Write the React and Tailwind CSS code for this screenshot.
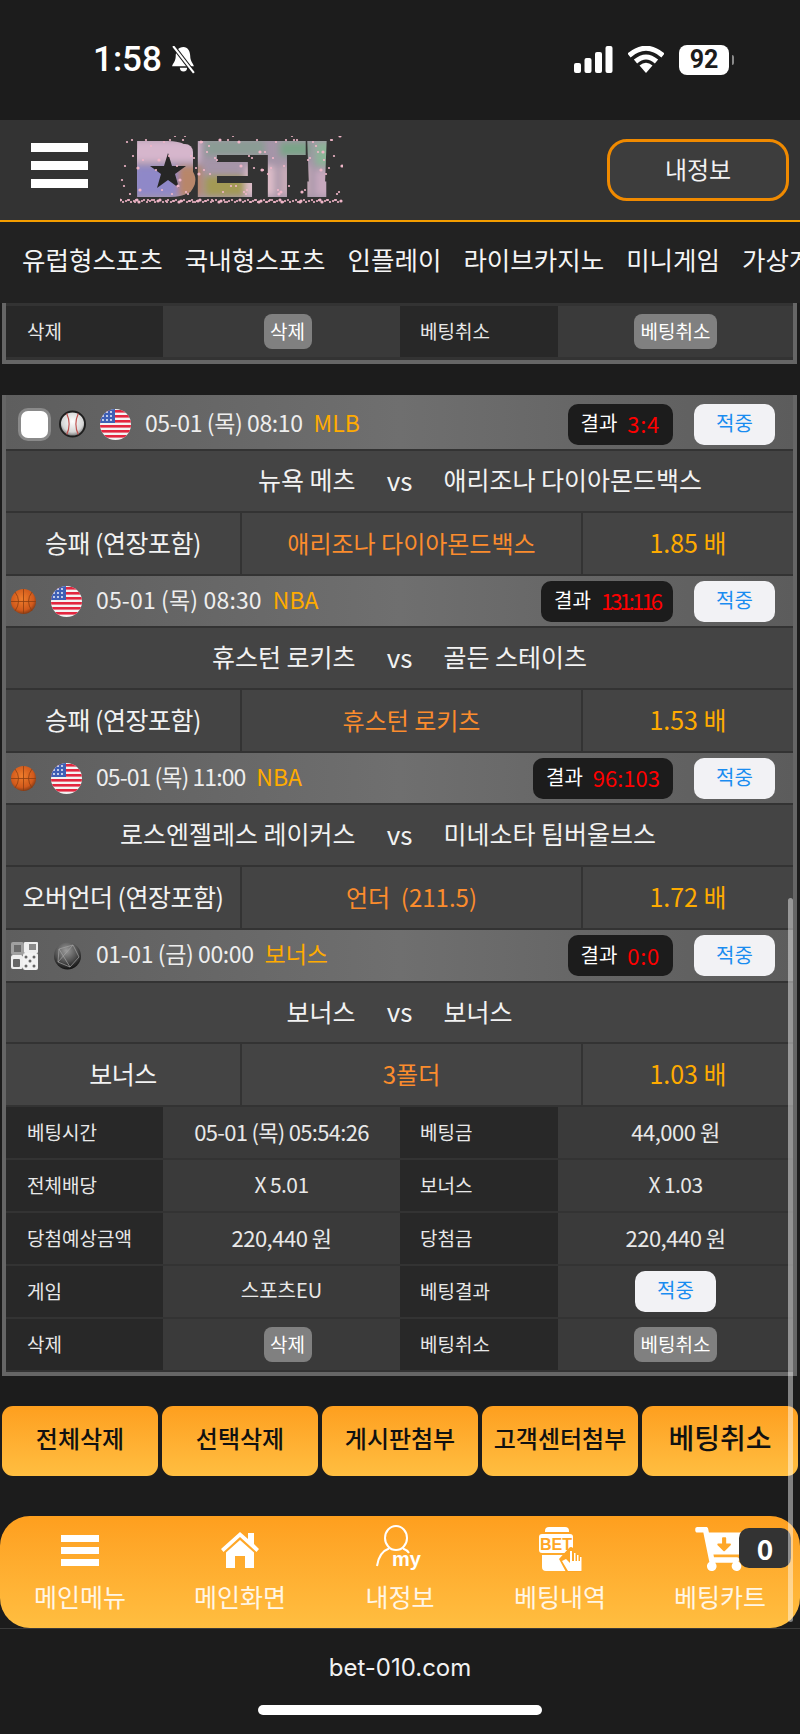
import { FaCartArrowDown } from 'react-icons/fa'

const matches = [
  { first: true, kind: 'baseball', date: '05-01 (목) 08:10', dateFit: 'tracking-[-0.4px]', league: 'MLB', score: '3:4', scoreFit: 'tracking-[0.7px]', home: '뉴욕 메츠', away: '애리조나 다이아몬드백스', market: '승패 (연장포함)', pick: '애리조나 다이아몬드백스', odds: '1.85 배', heads: 'h-[54px]', team: 'h-[60px]', bet: 'h-[61px]' },
  { kind: 'basketball', date: '05-01 (목) 08:30', dateFit: 'tracking-[0.15px]', league: 'NBA', score: '131:116', scoreFit: 'tracking-[-2.9px]', home: '휴스턴 로키츠', away: '골든 스테이츠', market: '승패 (연장포함)', pick: '휴스턴 로키츠', odds: '1.53 배', heads: 'h-[50px]', team: 'h-[60px]', bet: 'h-[61px]' },
  { kind: 'basketball', date: '05-01 (목) 11:00', dateFit: 'tracking-[-0.95px]', league: 'NBA', score: '96:103', scoreFit: 'tracking-[0px]', home: '로스엔젤레스 레이커스', away: '미네소타 팀버울브스', market: '오버언더 (연장포함)', pick: '언더  (211.5)', odds: '1.72 배', heads: 'h-[50px]', team: 'h-[60px]', bet: 'h-[61px]' },
  { kind: 'bonus', date: '01-01 (금) 00:00', dateFit: 'tracking-[-0.4px]', league: '보너스', score: '0:0', scoreFit: 'tracking-[0.7px]', home: '보너스', away: '보너스', market: '보너스', pick: '3폴더', odds: '1.03 배', heads: 'h-[51px]', team: 'h-[59px]', bet: 'h-[61px]' },
]

const navItems = ['유럽형스포츠', '국내형스포츠', '인플레이', '라이브카지노', '미니게임', '가상게임']
const actions = ['전체삭제', '선택삭제', '게시판첨부', '고객센터첨부']

// fixed pseudo random speckles for the logo
const speckles = Array.from({ length: 200 }, (_, i) => {
  const a = (i * 73 + 17) % 223
  const b = (i * i * 7 + i * 31) % 68
  const band = i % 2 === 0 ? 64 + (i % 3) : i % 7 === 0 ? 3 + (i % 4) : b
  return { x: a, y: band, r: i % 5 === 0 ? 1.6 : 1.1 }
})

function Flag() {
  return (
    <svg width="31" height="31" viewBox="0 0 31 31" className="shrink-0">
      <defs>
        <clipPath id="flagclip">
          <circle cx="15.5" cy="15.5" r="15.5" />
        </clipPath>
      </defs>
      <g clipPath="url(#flagclip)">
        <rect width="31" height="31" fill="#f3f3f3" />
        {[0, 5, 10, 15, 20, 25].map((y) => (
          <rect key={y} y={y + 1} width="31" height="2.6" fill="#e3263f" />
        ))}
        <rect width="15" height="14" fill="#3f5fb5" />
        {[3, 7, 11].map((x) =>
          [3, 7, 11].map((y) => <circle key={`${x}-${y}`} cx={x} cy={y} r="0.9" fill="#fff" />)
        )}
      </g>
    </svg>
  )
}

function Baseball() {
  return (
    <svg width="27" height="28" viewBox="0 0 28 28" className="shrink-0">
      <defs>
        <radialGradient id="bb" cx="50%" cy="40%" r="60%">
          <stop offset="0%" stopColor="#ffffff" />
          <stop offset="70%" stopColor="#d5d5d5" />
          <stop offset="100%" stopColor="#666666" />
        </radialGradient>
      </defs>
      <circle cx="14" cy="14" r="13" fill="url(#bb)" stroke="#1e1e1e" strokeWidth="2" />
      <path d="M8 3 Q13 14 8 25" fill="none" stroke="#c0504d" strokeWidth="1.2" />
      <path d="M20 3 Q15 14 20 25" fill="none" stroke="#c0504d" strokeWidth="1.2" />
    </svg>
  )
}

function Basketball() {
  return (
    <svg width="25" height="25" viewBox="0 0 25 25" className="shrink-0 mr-[1px]">
      <defs>
        <radialGradient id="bk" cx="45%" cy="40%" r="65%">
          <stop offset="0%" stopColor="#ef7d2c" />
          <stop offset="70%" stopColor="#d1591b" />
          <stop offset="100%" stopColor="#6e3214" />
        </radialGradient>
      </defs>
      <circle cx="12.5" cy="12.5" r="12.5" fill="url(#bk)" />
      <path d="M12.5 0V25M0 12.5H25M4 3Q11 12 4 22M21 3Q14 12 21 22" fill="none" stroke="#8a3d12" strokeWidth="0.8" />
    </svg>
  )
}

function BonusDice() {
  return (
    <svg width="28" height="28" viewBox="0 0 28 28" className="shrink-0">
      <rect x="0" y="0" width="13" height="13" rx="2" fill="#a0a0a0" />
      <rect x="3" y="3" width="7" height="7" fill="#6a6a6a" />
      <rect x="13" y="0" width="14" height="11" rx="1" fill="#eeeeee" />
      <rect x="18" y="2" width="7" height="6" fill="#8a8a8a" />
      <rect x="0" y="13" width="12" height="14" rx="2" fill="#eeeeee" />
      <rect x="2" y="17" width="7" height="8" rx="1" fill="#666666" />
      <rect x="12" y="11" width="15" height="17" rx="2" fill="#f2f2f2" />
      {[[15, 15], [23, 15], [19, 19], [15, 24], [23, 24]].map(([x, y]) => (
        <circle key={`${x}${y}`} cx={x} cy={y} r="1.5" fill="#666" />
      ))}
    </svg>
  )
}

function BonusBall() {
  return (
    <svg width="29" height="28" viewBox="0 0 29 28" className="shrink-0">
      <defs>
        <radialGradient id="bs" cx="45%" cy="30%" r="70%">
          <stop offset="0%" stopColor="#9a9a9a" />
          <stop offset="60%" stopColor="#4f4f4f" />
          <stop offset="100%" stopColor="#111111" />
        </radialGradient>
      </defs>
      <circle cx="14.5" cy="14" r="13.5" fill="url(#bs)" />
      <path d="M6 7L20 3L26 15L17 25L5 20ZM6 7L17 25M20 3L5 20" fill="none" stroke="#a5a5a5" strokeWidth="0.7" />
    </svg>
  )
}

function MatchHead({ m }) {
  return (
    <div className={`${m.heads} shrink-0 flex items-center justify-between bg-gradient-to-r from-[#5e5e5e] via-[#6f6f6f] to-[#5c5c5c] pr-[18px] ${m.first ? 'pl-[15px] pt-[4px]' : 'pl-[5px]'}`}>
      <div className="flex items-center gap-[14px]">
        {m.first && <div className="w-[27px] h-[27px] -mr-[3px] shrink-0 rounded-[7px] bg-white ring-[3px] ring-[#8a8a8a]" />}
        {m.kind === 'baseball' && <Baseball />}
        {m.kind === 'basketball' && <Basketball />}
        {m.kind === 'bonus' && <BonusDice />}
        {m.kind === 'bonus' ? <BonusBall /> : <Flag />}
        <div className="flex items-center gap-[11px] text-[23px] leading-none text-[#eeeeee] pb-[4px]">
          <span className={m.dateFit}>{m.date}</span>
          <span className="text-[#ffab00]">{m.league}</span>
        </div>
      </div>
      <div className="flex items-center gap-[21px]">
        <div className="h-[41px] px-[13px] pb-[2px] flex items-center gap-[10px] rounded-[10px] bg-[#1c1c1c] text-[20px] leading-none">
          <span className="text-white">결과</span>
          <span className={`text-[22px] text-[#ff0000] ${m.scoreFit}`}>{m.score}</span>
        </div>
        <div className="w-[81px] h-[41px] pb-[2px] flex items-center justify-center rounded-[10px] bg-[#f2f2f5] text-[20px] leading-none text-[#1a8cf0]">적중</div>
      </div>
    </div>
  )
}

function Match({ m }) {
  return (
    <>
      <MatchHead m={m} />
      <div className={`${m.team} shrink-0 flex items-center pb-[3px] bg-[#444444] text-[25px] leading-none text-[#f2f2f2]`}>
        <div className="flex-1 text-right">{m.home}</div>
        <div className="w-[88px] text-center text-[26px]">vs</div>
        <div className="flex-1 text-left">{m.away}</div>
      </div>
      <div className={`${m.bet} shrink-0 grid grid-cols-[234px_339px_1fr] gap-x-[2px] bg-[#333333] text-[25px] leading-none`}>
        <div className="flex items-center justify-center pb-[2px] bg-[#444444] text-[#f2f2f2] tracking-[-0.5px] whitespace-nowrap">{m.market}</div>
        <div className="flex items-center justify-center pb-[2px] bg-[#444444] text-[24px] text-[#fb8c2d] whitespace-pre">{m.pick}</div>
        <div className="flex items-center justify-center pb-[2px] bg-[#444444] text-[#ffab00]">{m.odds}</div>
      </div>
    </>
  )
}

function InfoRow({ a, b, c, d }) {
  return (
    <div className="h-[51px] shrink-0 grid grid-cols-[157px_237px_158px_1fr] text-[19px] leading-none text-[#e8e8e8]">
      <div className="flex items-center pl-[21px] pb-[3px] bg-[#282828]">{a}</div>
      <div className="flex items-center justify-center pb-[3px] bg-[#3a3a3a]">{b}</div>
      <div className="flex items-center pl-[20px] pb-[3px] bg-[#282828]">{c}</div>
      <div className="flex items-center justify-center pb-[3px] bg-[#3a3a3a]">{d}</div>
    </div>
  )
}

function DeleteRow() {
  return (
    <InfoRow
      a="삭제"
      b={<span className="h-[35px] w-[48px] ml-[12px] mt-[3px] pb-[3px] flex items-center justify-center rounded-[8px] bg-[#808080] text-white whitespace-nowrap">삭제</span>}
      c="베팅취소"
      d={<span className="h-[35px] w-[83px] mt-[3px] pb-[3px] flex items-center justify-center rounded-[8px] bg-[#808080] text-white whitespace-nowrap">베팅취소</span>}
    />
  )
}

function Logo() {
  return (
    <svg width="223" height="68" viewBox="0 0 223 68" className="shrink-0">
      <defs>
        <mask id="betmask" maskUnits="userSpaceOnUse" x="0" y="0" width="223" height="68">
          <text x="15" y="58" fontFamily="Liberation Sans" fontWeight="700" fontSize="72" textLength="196" lengthAdjust="spacingAndGlyphs" fill="#fff" stroke="#fff" strokeWidth="6">BET!</text>
          <rect x="17" y="8" width="56" height="50" rx="8" fill="#fff" />
        </mask>
        <filter id="soft">
          <feGaussianBlur stdDeviation="3" />
        </filter>
      </defs>
      <g mask="url(#betmask)">
        <rect width="223" height="68" fill="#a595a8" />
        <g filter="url(#soft)">
          <rect x="10" y="4" width="70" height="22" fill="#d6b6cc" />
          <rect x="14" y="30" width="46" height="30" fill="#8f88c8" />
          <rect x="58" y="30" width="24" height="30" fill="#b8866a" />
          <rect x="85" y="4" width="60" height="16" fill="#8a9c94" />
          <rect x="85" y="40" width="40" height="20" fill="#a39a54" />
          <rect x="125" y="30" width="30" height="30" fill="#dcbcc8" />
          <rect x="160" y="6" width="30" height="14" fill="#7aa488" />
          <rect x="160" y="30" width="30" height="30" fill="#c8aab8" />
          <rect x="195" y="6" width="20" height="24" fill="#8cb498" />
          <rect x="195" y="34" width="20" height="26" fill="#c6a8bd" />
        </g>
      </g>
      <polygon points="48,17 52,30 66,30 55,38 59,52 48,44 37,52 41,38 30,30 44,30" fill="#262626" />
      {speckles.map((s, i) => (
        <circle key={i} cx={s.x} cy={s.y} r={s.r} fill="#f0b6c8" />
      ))}
    </svg>
  )
}

function StatusBar() {
  return (
    <div className="h-[120px] shrink-0 flex items-center justify-between pl-[93px] pr-[66px] pb-[1px] bg-[#1c1c1c]">
      <div className="flex items-center gap-[7px]">
        <span className="font-['Roboto',sans-serif] font-medium text-[35px] leading-none text-white">1:58</span>
        <svg width="29" height="28" viewBox="3 1 22 27">
          <path d="M14 2c-5 0-7.500 4-7.500 9 0 5-3 7-3.500 9.500h21c-.5-2.500-3.500-4.500-3.500-9.500 0-5-2.500-9-6.500-9z" fill="#fff" />
          <path d="M10.500 22a3.500 3.500 0 0 0 7 0z" fill="#fff" />
          <path d="M4 1L24 27" stroke="#1c1c1c" strokeWidth="4" />
          <path d="M4 1L24 27" stroke="#fff" strokeWidth="2" />
        </svg>
      </div>
      <div className="flex items-center gap-[15px]">
        <svg width="39" height="27" viewBox="0 0 39 27">
          <rect x="0" y="17" width="7" height="10" rx="2" fill="#fff" />
          <rect x="10.500" y="12" width="7" height="15" rx="2" fill="#fff" />
          <rect x="21" y="6" width="7" height="21" rx="2" fill="#fff" />
          <rect x="31.500" y="0" width="7" height="27" rx="2" fill="#fff" />
        </svg>
        <svg width="36" height="27" viewBox="0 0 36 27">
          <path d="M1 9.500Q18-5 35 9.500" fill="none" stroke="#fff" strokeWidth="5" />
          <path d="M7.500 15.500Q18 6.500 28.500 15.500" fill="none" stroke="#fff" strokeWidth="5" />
          <path d="M11.500 19.500Q18 14 24.500 19.500L18 27z" fill="#fff" />
        </svg>
        <div className="flex items-center gap-[3px]">
          <div className="w-[50px] h-[30px] flex items-center justify-center rounded-[8px] bg-white font-['Roboto',sans-serif] font-bold text-[25px] leading-none text-[#1c1c1c]">92</div>
          <div className="w-[2px] h-[10px] rounded-r-full bg-[#8a8a8a]" />
        </div>
      </div>
    </div>
  )
}

function Header() {
  return (
    <div className="h-[102px] shrink-0 flex items-center justify-between pl-[31px] pr-[11px] bg-[#333333] border-b-2 border-[#f59e00]">
      <div className="flex items-center gap-[32px]">
        <div className="w-[57px] mb-[9px] flex flex-col gap-[9px]">
          <div className="h-[9px] bg-white" />
          <div className="h-[9px] bg-white" />
          <div className="h-[9px] bg-white" />
        </div>
        <Logo />
      </div>
      <div className="w-[182px] h-[62px] pb-[3px] flex items-center justify-center rounded-[20px] border-[3px] border-[#f08a00] bg-[#3d3d3d] text-[24px] leading-none text-[#f2f2f2]">내정보</div>
    </div>
  )
}

function HomeIcon() {
  return (
    <svg width="38" height="37" viewBox="0 0 38 37" fill="#fff">
      <path d="M19 1L27 8V2H33V13L38 18L35.500 21L19 6L2.500 21L0 18z" />
      <path d="M5 21.500L19 9L33 21.500V37H24V25H14V37H5z" />
    </svg>
  )
}

function BetIcon() {
  return (
    <svg width="45" height="46" viewBox="0 0 45 46">
      <path d="M7 5Q7 1 11 1H27Q31 1 31 5V6H7z" fill="#fff" />
      <rect x="1" y="8" width="34" height="19" rx="3" fill="#fff" />
      <text x="18" y="23.500" textAnchor="middle" fontFamily="Liberation Sans" fontWeight="700" fontSize="16" fill="#fea625">BET</text>
      <path d="M4 29H25L32 38V45H8Q4 45 4 41z" fill="#fff" />
      <path d="M21 33L31 22Q33 20 35 22V28L44 30V46H28z" fill="#fea625" />
      <path d="M24 35L28 33L32 37V25H34V35H36V27H37.500V35H39V29H40.500V35H42V31H43.500V45H30z" fill="#fff" />
    </svg>
  )
}

function PersonIcon() {
  return (
    <svg width="48" height="48" viewBox="0 0 48 48">
      <ellipse cx="20" cy="13" rx="11" ry="12" fill="none" stroke="#fff" strokeWidth="2" />
      <path d="M1 41Q3 27 13 23.500M27 23.500Q31 25 33 28" fill="none" stroke="#fff" strokeWidth="2" />
      <text x="16" y="41" fontFamily="Liberation Sans" fontWeight="700" fontSize="20" fill="#fff">my</text>
    </svg>
  )
}

function BottomNav() {
  const items = [
    { label: '메인메뉴', icon: (
      <div className="w-[38px] mt-[3px] flex flex-col gap-[5px]">
        <div className="h-[7px] bg-white" />
        <div className="h-[7px] bg-white" />
        <div className="h-[7px] bg-white" />
      </div>
    ) },
    { label: '메인화면', icon: <HomeIcon /> },
    { label: '내정보', icon: <PersonIcon /> },
    { label: '베팅내역', icon: <BetIcon /> },
    { label: '베팅카트', icon: <FaCartArrowDown className="w-[50px] h-[44px] text-white" /> },
  ]
  return (
    <div className="relative h-[112px] shrink-0 mt-[40px] grid grid-cols-5 rounded-[30px] bg-gradient-to-b from-[#fe9f1e] to-[#ffbe40]">
      {items.map((item) => (
        <div key={item.label} className="flex flex-col items-center">
          <div className="h-[60px] pt-[6px] flex items-center justify-center">{item.icon}</div>
          <div className="text-[25px] leading-none text-[#fff6e6] mt-[8px]">{item.label}</div>
        </div>
      ))}
      <div className="absolute left-[739px] top-[12px] w-[52px] h-[40px] flex items-center justify-center rounded-[10px] bg-[#333333] text-[28px] leading-none font-bold text-white">0</div>
    </div>
  )
}

export default function App() {
  const num = 'text-[22px] tracking-[-0.5px]'
  return (
    <div className="relative w-[800px] h-[1734px] overflow-hidden flex flex-col bg-[#1c1c1c] font-['Noto_Sans_CJK_KR','Noto_Sans',sans-serif]">
      <StatusBar />
      <Header />
      <div className="h-[81px] shrink-0 flex items-center gap-[22px] pl-[22px] pb-[8px] overflow-hidden bg-[#222222] text-[25.5px] leading-none text-[#f5f5f5] whitespace-nowrap">
        {navItems.map((n) => (
          <span key={n}>{n}</span>
        ))}
      </div>

      <div className="h-[61px] w-[795px] ml-[2px] shrink-0 pt-[3px] border-x-4 border-b-4 border-[#666666] bg-[#333333]">
        <DeleteRow />
      </div>

      <div className="w-[795px] ml-[2px] mt-[31px] shrink-0 flex flex-col gap-[2px] border-x-4 border-b-4 border-[#666666] bg-[#333333] pb-[2px]">
        {matches.map((m) => (
          <Match key={m.date + m.league} m={m} />
        ))}
        <InfoRow a="베팅시간" b={<span className="text-[22px] tracking-[-0.7px]">05-01 (목) 05:54:26</span>} c="베팅금" d={<span className={num}>44,000 원</span>} />
        <InfoRow a="전체배당" b={<span className="text-[21px] tracking-[-0.6px]">X 5.01</span>} c="보너스" d={<span className="text-[21px] tracking-[-0.6px]">X 1.03</span>} />
        <InfoRow a="당첨예상금액" b={<span className={num}>220,440 원</span>} c="당첨금" d={<span className={num}>220,440 원</span>} />
        <InfoRow
          a="게임"
          b={<span className="text-[20px]">스포츠EU</span>}
          c="베팅결과"
          d={<span className="w-[81px] h-[41px] mt-[3px] pb-[3px] flex items-center justify-center rounded-[10px] bg-[#f2f2f5] text-[20px] text-[#1a8cf0]">적중</span>}
        />
        <DeleteRow />
      </div>

      <div className="h-[70px] shrink-0 mt-[30px] px-[2px] grid grid-cols-5 gap-[4px] text-[#111111]">
        {actions.map((a) => (
          <div key={a} className="flex items-center justify-center rounded-[11px] bg-gradient-to-b from-[#fe9f1e] to-[#ffbe40] text-[24px] leading-none font-medium pb-[7px] whitespace-nowrap">{a}</div>
        ))}
        <div className="flex items-center justify-center rounded-[11px] bg-gradient-to-b from-[#fe9f1e] to-[#ffbe40] text-[28px] leading-none font-medium pb-[8px] whitespace-nowrap">베팅취소</div>
      </div>

      <BottomNav />

      <div className="flex-1 flex flex-col items-center border-t border-[#3a3a3a]">
        <div className="mt-[27px] font-['Inter',sans-serif] text-[24px] leading-none text-[#f2f2f2]">bet-010.com</div>
        <div className="mt-[25px] w-[284px] h-[10px] rounded-full bg-white" />
      </div>

      <div className="absolute left-[788px] top-[898px] w-[5px] h-[724px] rounded-full bg-white/45" />
    </div>
  )
}
